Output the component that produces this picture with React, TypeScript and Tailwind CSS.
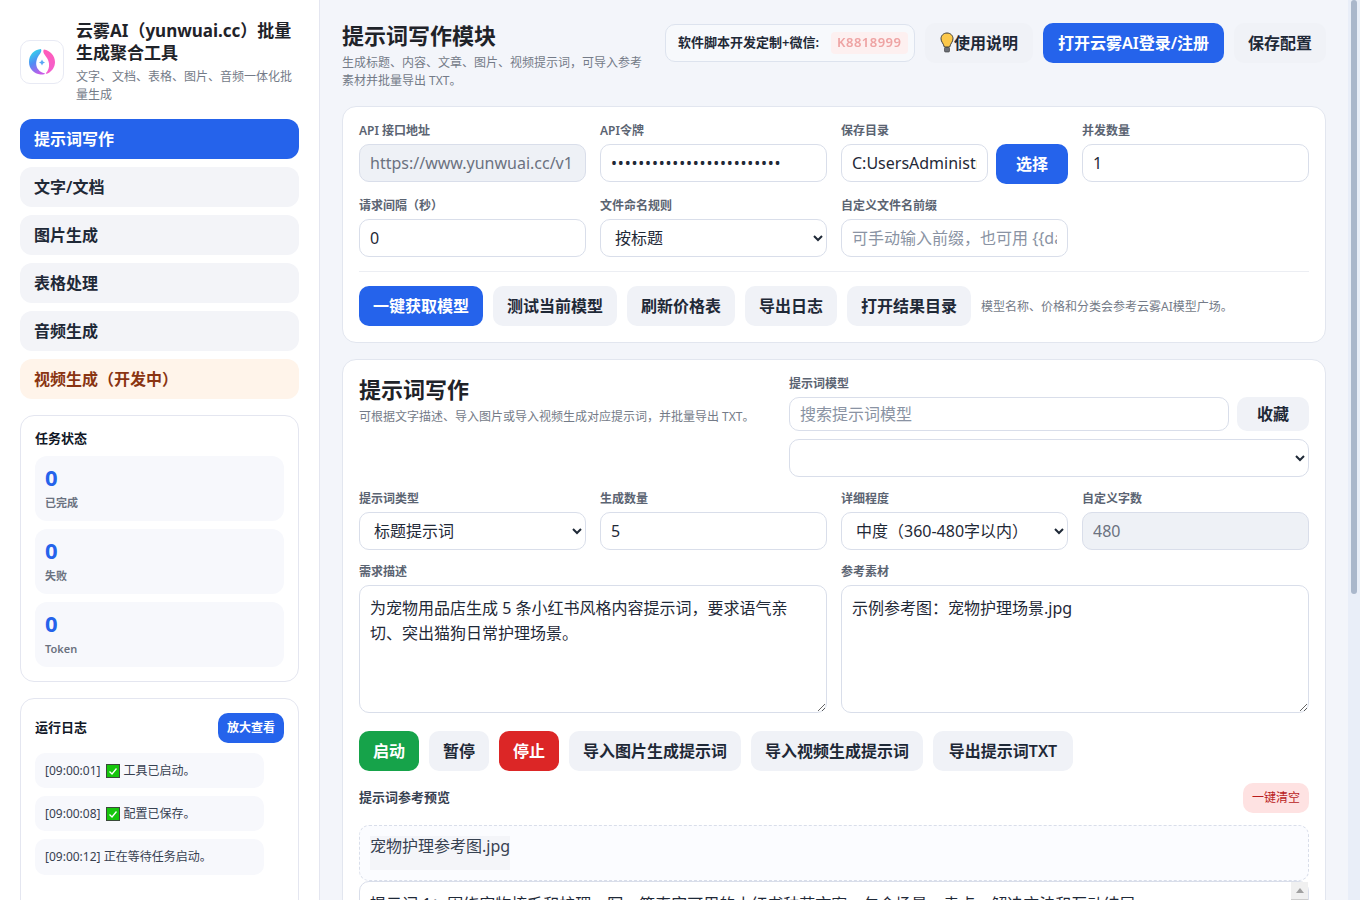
import type { ReactNode } from "react";

const navItems = ["提示词写作", "文字/文档", "图片生成", "表格处理", "音频生成"];

const stats = [
	{ value: "0", label: "已完成" },
	{ value: "0", label: "失败" },
	{ value: "0", label: "Token" },
];

const fieldClass =
	"h-[38px] w-full min-w-0 rounded-[10px] border border-[#d9deea] px-[10px] text-base outline-none";
const inputClass = fieldClass + " bg-white text-[#1f2937] placeholder:text-[#8a93a3]";
const disabledClass = fieldClass + " bg-[#eef1f6] text-[#6b7280]";
const selectClass = fieldClass + " bg-white text-[#1f2937]";
const grayBtn =
	"h-10 shrink-0 rounded-[10px] bg-[#f0f2f7] px-[14px] text-base font-semibold text-[#1f2937]";
const blueBtn =
	"h-10 shrink-0 rounded-[10px] bg-[#2563eb] px-[14px] text-base font-semibold text-white";

function Logo() {
	return (
		<div className="flex h-11 w-11 shrink-0 items-center justify-center rounded-[10px] border border-[#e8eaf4] bg-white">
			<svg width="28" height="28" viewBox="0 0 28 28">
				<defs>
					<linearGradient id="logoLeft" x1="0.2" y1="0" x2="0.6" y2="1">
						<stop offset="0" stopColor="#2fe0e8" />
						<stop offset="0.5" stopColor="#4f8bf5" />
						<stop offset="1" stopColor="#c65be8" />
					</linearGradient>
					<linearGradient id="logoRight" x1="0.5" y1="0" x2="0.5" y2="1">
						<stop offset="0" stopColor="#ff5cb8" />
						<stop offset="1" stopColor="#f25fd0" />
					</linearGradient>
				</defs>
				<path d="M13 1C6 1.500 1 7 1 14C1 20.500 6 26 12.500 26.500C15 26.700 17 26.200 17 25.500C13 24.500 9.500 22 8.500 18C7.500 13.500 9.500 9 11.500 6.500C12.800 4.800 14 3 13 1Z" fill="url(#logoLeft)" />
				<path d="M16 1.500C22 2.500 27 7.500 27 14C27 19 24 23.500 19.500 25.500C18.500 26 17.500 25.500 18 25C20 23 21.500 19.500 21 15.500C20.500 10.500 16.500 7.500 15.500 4.500C15.200 3.300 15.300 2 16 1.500Z" fill="url(#logoRight)" />
				<path d="M14 11.500L15 13.500L17 14.500L15 15.500L14 17.500L13 15.500L11 14.500L13 13.500Z" fill="#5aa7f5" />
			</svg>
		</div>
	);
}

function CheckEmoji() {
	return (
		<svg width="14" height="14" viewBox="0 0 14 14" className="mr-[4px] ml-[5px] inline-block shrink-0">
			<rect x="0.500" y="0.500" width="13" height="13" fill="#16c60c" stroke="#3a4a3a" />
			<path d="M3.500 7.500L6 10L10.500 4.500" fill="none" stroke="#fff" strokeWidth="1.300" />
		</svg>
	);
}

function Bulb() {
	return (
		<svg width="14" height="22" viewBox="0 0 14 22" className="shrink-0">
			<path d="M7 1C3.500 1 1 3.500 1 6.800C1 9.800 3.600 11.500 4.300 15H9.700C10.400 11.500 13 9.800 13 6.800C13 3.500 10.500 1 7 1Z" fill="#fcc84a" stroke="#3b3b3b" strokeWidth="1" />
			<rect x="4.500" y="15.500" width="5" height="4.500" rx="1" fill="#6b6f76" stroke="#333" strokeWidth="0.600" />
		</svg>
	);
}

function Field({ label, children }: { label: string; children: ReactNode }) {
	return (
		<div>
			<div className="mb-[5px] h-4 text-xs leading-4 font-semibold text-[#5b6472]">{label}</div>
			{children}
		</div>
	);
}

function Sidebar() {
	return (
		<aside className="flex h-full w-[320px] shrink-0 flex-col overflow-hidden border-r border-[#e4e6f0] bg-white px-5 pt-[19px]">
			<div className="flex items-center gap-3">
				<Logo />
				<div className="min-w-0">
					<div className="mt-[1px] text-[17px] leading-[22px] font-bold text-[#1f2329]">云雾AI（yunwuai.cc）批量生成聚合工具</div>
					<div className="mt-[4px] text-xs leading-[18px] text-[#747b88]">文字、文档、表格、图片、音频一体化批量生成</div>
				</div>
			</div>

			<nav className="mt-[15px] flex shrink-0 flex-col gap-2">
				{navItems.map((item, i) => (
					<div
						key={item}
						className={
							"flex h-10 items-center rounded-xl px-[14px] text-base font-semibold " +
							(i === 0 ? "bg-[#2563eb] text-white" : "bg-[#f3f4f8] text-[#1f2937]")
						}
					>
						{item}
					</div>
				))}
				<div className="flex h-10 items-center rounded-xl bg-[#fff4ea] px-[14px] text-base font-semibold text-[#8a3412]">
					视频生成（开发中）
				</div>
			</nav>

			<section className="mt-4 shrink-0 rounded-[14px] border border-[#e4e6f0] px-[14px] pt-[14px] pb-[14px]">
				<div className="h-4 text-[13px] leading-4 font-semibold text-[#111827]">任务状态</div>
				<div className="mt-[10px] flex flex-col gap-2">
					{stats.map((s) => (
						<div key={s.label} className="h-[65px] rounded-xl bg-[#f7f8fc] px-[10px] pt-[7px]">
							<div className="text-[22px] leading-[28px] font-bold text-[#2563eb]">{s.value}</div>
							<div className="mt-[3px] text-[11px] leading-[18px] font-semibold text-[#6b7280]">{s.label}</div>
						</div>
					))}
				</div>
			</section>

			<section className="mt-4 shrink-0 rounded-[14px] border border-[#e4e6f0] px-[14px] pt-[14px] pb-16">
				<div className="flex h-[30px] items-center justify-between">
					<div className="text-[13px] font-semibold text-[#111827]">运行日志</div>
					<button className="h-[30px] rounded-[10px] bg-[#2563eb] px-[9px] text-xs font-bold text-white">放大查看</button>
				</div>
				<div className="mt-[10px] flex w-[229px] flex-col gap-2">
					<div className="flex h-[35px] items-center rounded-[10px] bg-[#f7f8fc] px-[10px] text-xs whitespace-nowrap text-[#374151]">
						[09:00:01]
						<CheckEmoji />
						工具已启动。
					</div>
					<div className="flex h-[35px] items-center rounded-[10px] bg-[#f7f8fc] px-[10px] text-xs whitespace-nowrap text-[#374151]">
						[09:00:08]
						<CheckEmoji />
						配置已保存。
					</div>
					<div className="flex h-9 items-center rounded-[10px] bg-[#f7f8fc] px-[10px] text-xs whitespace-nowrap text-[#374151]">
						[09:00:12] 正在等待任务启动。
					</div>
				</div>
			</section>
		</aside>
	);
}

function TopBar() {
	return (
		<header className="flex items-start justify-between">
			<div className="w-[304px]">
				<h1 className="-mt-[2px] text-[22px] leading-[28px] font-bold text-[#1f2329]">提示词写作模块</h1>
				<p className="mt-[5px] text-xs leading-[18px] text-[#747b88]">生成标题、内容、文章、图片、视频提示词，可导入参考素材并批量导出 TXT。</p>
			</div>
			<div className="flex items-center gap-[10px]">
				<div className="flex h-[38px] w-[250px] items-center rounded-[10px] border border-[#dde3ee] bg-[#f7f9fc] pr-2 pl-3 text-[13px] font-semibold whitespace-nowrap text-[#1f2937]">
					软件脚本开发定制+微信:
					<span className="ml-[12px] rounded bg-[#fdf0f0] px-[6px] py-[1px] tracking-[0.5px] text-[#eea3a3] blur-[0.3px]">K8818999</span>
				</div>
				<button className={grayBtn + " flex w-[108px] items-center justify-center"}>
					<Bulb />
					使用说明
				</button>
				<button className={blueBtn + " w-[181px]"}>打开云雾AI登录/注册</button>
				<button className={grayBtn + " w-[92px]"}>保存配置</button>
			</div>
		</header>
	);
}

function ConfigCard() {
	return (
		<section className="mt-[16px] rounded-[14px] border border-[#e2e6ef] bg-white p-4">
			<div className="grid grid-cols-4 gap-[14px]">
				<Field label="API 接口地址">
					<input className={disabledClass} defaultValue="https://www.yunwuai.cc/v1" />
				</Field>
				<Field label="API令牌">
					<input className={inputClass + " tracking-[0.8px]"} type="password" defaultValue="sk-demo-token-0123456789x" />
				</Field>
				<Field label="保存目录">
					<div className="flex gap-2">
						<input className={inputClass} defaultValue="C:UsersAdministratorDesktop" />
						<button className="h-10 w-[72px] shrink-0 rounded-[10px] bg-[#2563eb] text-base font-semibold text-white">选择</button>
					</div>
				</Field>
				<Field label="并发数量">
					<input className={inputClass} defaultValue="1" />
				</Field>
				<Field label="请求间隔（秒）">
					<input className={inputClass} defaultValue="0" />
				</Field>
				<Field label="文件命名规则">
					<select className={selectClass} defaultValue="按标题">
						<option>按标题</option>
					</select>
				</Field>
				<Field label="自定义文件名前缀">
					<input className={inputClass} placeholder="可手动输入前缀，也可用 {{date}}" />
				</Field>
			</div>
			<div className="mt-[14px] flex items-center gap-[10px] border-t border-[#eceef3] pt-[14px]">
				<button className={blueBtn}>一键获取模型</button>
				<button className={grayBtn}>测试当前模型</button>
				<button className={grayBtn}>刷新价格表</button>
				<button className={grayBtn}>导出日志</button>
				<button className={grayBtn}>打开结果目录</button>
				<span className="mt-[1px] text-xs text-[#747b88]">模型名称、价格和分类会参考云雾AI模型广场。</span>
			</div>
		</section>
	);
}

function PromptCard() {
	return (
		<section className="mt-4 rounded-[14px] border border-[#e2e6ef] bg-white p-4">
			<div className="flex justify-between">
				<div>
					<h2 className="-mt-[1px] text-[22px] leading-[28px] font-bold text-[#1f2329]">提示词写作</h2>
					<p className="mt-[5px] text-xs leading-[18px] text-[#747b88]">可根据文字描述、导入图片或导入视频生成对应提示词，并批量导出 TXT。</p>
				</div>
				<div className="w-[520px]">
					<div className="mb-[5px] h-4 text-xs leading-4 font-semibold text-[#5b6472]">提示词模型</div>
					<div className="flex gap-2">
						<input className="h-[34px] min-w-0 flex-1 rounded-[10px] border border-[#d9deea] px-[10px] text-base placeholder:text-[#8a93a3] outline-none" placeholder="搜索提示词模型" />
						<button className="h-[34px] w-[72px] rounded-[10px] bg-[#f0f2f7] text-base font-semibold text-[#1f2937]">收藏</button>
					</div>
					<select className={selectClass + " mt-2"} />
				</div>
			</div>

			<div className="mt-[14px] grid grid-cols-4 gap-[14px]">
				<Field label="提示词类型">
					<select className={selectClass} defaultValue="标题提示词">
						<option>标题提示词</option>
					</select>
				</Field>
				<Field label="生成数量">
					<input className={inputClass} defaultValue="5" />
				</Field>
				<Field label="详细程度">
					<select className={selectClass} defaultValue="中度（360-480字以内）">
						<option>中度（360-480字以内）</option>
					</select>
				</Field>
				<Field label="自定义字数">
					<input className={disabledClass} defaultValue="480" />
				</Field>
			</div>

			<div className="mt-[14px] grid grid-cols-2 gap-[14px]">
				<Field label="需求描述">
					<textarea
						className="block h-32 w-full rounded-[10px] border border-[#d9deea] px-[10px] py-[10px] text-base leading-[25px] text-[#1f2937] outline-none"
						defaultValue="为宠物用品店生成 5 条小红书风格内容提示词，要求语气亲切、突出猫狗日常护理场景。"
					/>
				</Field>
				<Field label="参考素材">
					<textarea
						className="block h-32 w-full rounded-[10px] border border-[#d9deea] px-[10px] py-[10px] text-base leading-[25px] text-[#1f2937] outline-none"
						defaultValue="示例参考图：宠物护理场景.jpg"
					/>
				</Field>
			</div>

			<div className="mt-[18px] flex gap-[10px]">
				<button className="h-10 w-[60px] rounded-[10px] bg-[#16a34a] text-base font-semibold text-white">启动</button>
				<button className="h-10 w-[60px] rounded-[10px] bg-[#f0f2f7] text-base font-semibold text-[#1f2937]">暂停</button>
				<button className="h-10 w-[60px] rounded-[10px] bg-[#dc2626] text-base font-semibold text-white">停止</button>
				<button className={grayBtn}>导入图片生成提示词</button>
				<button className={grayBtn}>导入视频生成提示词</button>
				<button className={grayBtn + " w-[140px]"}>导出提示词TXT</button>
			</div>

			<div className="mt-3 flex h-[30px] items-center justify-between">
				<div className="text-[13px] font-semibold text-[#374151]">提示词参考预览</div>
				<button className="h-[30px] rounded-[10px] bg-[#fee2e2] px-[9px] text-xs text-[#b91c1c]">一键清空</button>
			</div>

			<div className="mt-3 h-14 rounded-[10px] border border-dashed border-[#d9deea] bg-[#fbfcff] p-[10px]">
				<div className="h-[34px] w-fit bg-[#f4f5f9] text-base leading-[20px] text-[#374151]">宠物护理参考图.jpg</div>
			</div>

			<div className="relative">
				<textarea
					readOnly
					className="block h-[442px] w-full resize-none overflow-hidden rounded-[10px] border border-[#d9deea] bg-white px-[10px] pt-[10px] text-base leading-[25px] text-[#1f2937] outline-none"
					defaultValue={"提示词 1：围绕宠物梳毛和护理，写一篇真实可用的小红书种草文案，包含场景、卖点、解决方法和互动结尾。"}
				/>
				<div className="absolute top-px right-px bottom-px flex w-[17px] flex-col items-center bg-[#f0f0f0] pt-[6px]">
					<div className="h-0 w-0 border-x-[4px] border-b-[5px] border-x-transparent border-b-[#a0a0a0]" />
					<div className="mt-[6px] h-[200px] w-full bg-[#cdcdcd]" />
				</div>
			</div>
		</section>
	);
}

export default function App() {
	return (
		<div className="flex h-screen overflow-hidden bg-[#f3f5fa] font-['Noto_Sans','Noto_Sans_CJK_SC',sans-serif]">
			<Sidebar />
			<main className="h-full min-w-0 flex-1 overflow-hidden px-[22px] pt-[23px]">
				<TopBar />
				<ConfigCard />
				<PromptCard />
			</main>
			<div className="h-full w-3 shrink-0 bg-[#e9eef8] px-[3px]">
				<div className="h-[594px] w-full rounded-full bg-[#aab7cb]" />
			</div>
		</div>
	);
}
